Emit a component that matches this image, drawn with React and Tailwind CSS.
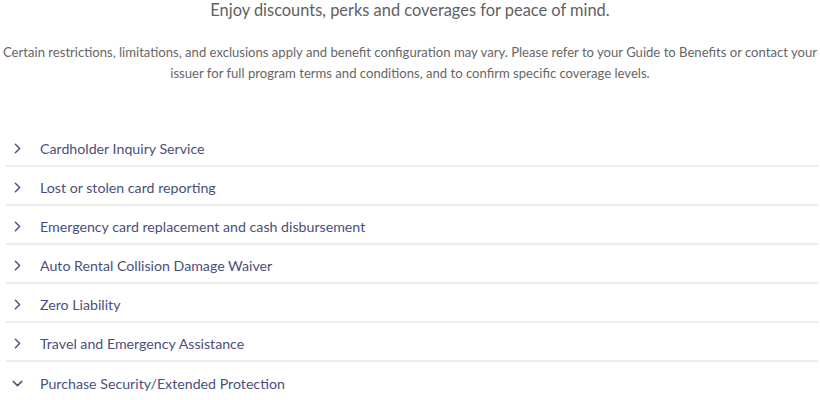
import { ChevronRight, ChevronDown } from "lucide-react";

const items = [
  "Cardholder Inquiry Service",
  "Lost or stolen card reporting",
  "Emergency card replacement and cash disbursement",
  "Auto Rental Collision Damage Waiver",
  "Zero Liability",
  "Travel and Emergency Assistance",
  "Purchase Security/Extended Protection",
];

export default function App() {
  return (
    <div className="w-[820px] h-[400px] overflow-hidden bg-white" style={{ fontFamily: 'Lato, sans-serif' }}>
      <h2 className="text-center text-[16.4px] leading-[22px] text-[#5f5f5f] -mt-[1px]">
        Enjoy discounts, perks and coverages for peace of mind.
      </h2>
      <p className="mt-[21px] text-center text-[13.1px] leading-[21px] text-[#666] whitespace-nowrap">
        Certain restrictions, limitations, and exclusions apply and benefit configuration may vary. Please refer to your Guide to Benefits or contact your
        <br />
        issuer for full program terms and conditions, and to confirm specific coverage levels.
      </p>
      <ul className="mt-[44px] ml-[6px] mr-[2px]">
        {items.map((t, i) => {
          const last = i === items.length - 1;
          return (
            <li
              key={t}
              className={`flex items-center h-[39px] pt-[4px] ${last ? "" : "border-b-2 border-[#ececec]"}`}
            >
              <span className="w-[34px] flex pl-[3px] text-[#4a4f7a]">
                {last ? (
                  <ChevronDown size={17} strokeWidth={2} />
                ) : (
                  <ChevronRight size={17} strokeWidth={2} />
                )}
              </span>
              <span className="text-[14.2px] text-[#4a4f7a]">{t}</span>
            </li>
          );
        })}
      </ul>
    </div>
  );
}
